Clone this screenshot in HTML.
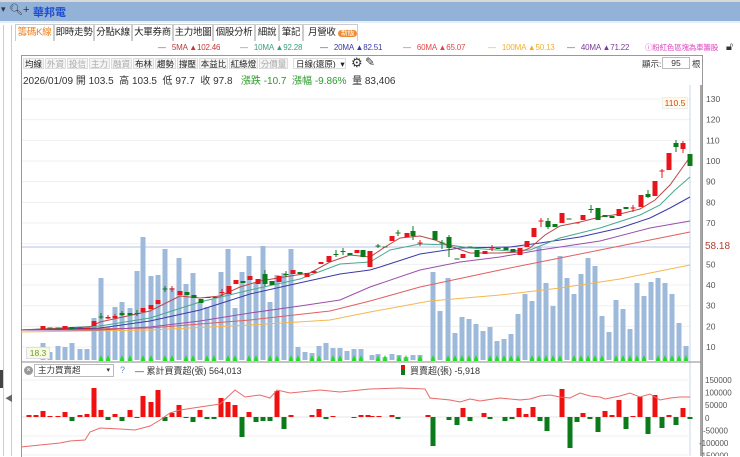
<!DOCTYPE html>
<html><head><meta charset="utf-8">
<style>
*{margin:0;padding:0;box-sizing:border-box}
body{width:740px;height:456px;overflow:hidden;background:#fff;font-family:"Liberation Sans","Noto Sans CJK TC",sans-serif;position:relative;font-size:10px;color:#333}
.abs{position:absolute;white-space:nowrap}
#top{left:0;top:0;width:740px;height:23px;background:linear-gradient(#d8d8d8 0,#d8d8d8 2px,#93b2d8 2px,#93b2d8 21px,#e8eef6 21px)}
.tab{position:absolute;top:24px;height:17px;border:1px solid #ccc;border-bottom:none;background:#fff;font-size:9.5px;line-height:16px;text-align:center;color:#222;white-space:nowrap;overflow:hidden;letter-spacing:-0.3px}
.tb{position:absolute;top:58px;height:11px;border:1px solid #ddd;background:#f4f4f4;font-size:8.5px;line-height:10px;text-align:center;color:#222;white-space:nowrap;overflow:hidden}
.tb.g{color:#aaa}
.leg{position:absolute;top:42px;font-size:8px;line-height:11px;white-space:nowrap;letter-spacing:-0.2px}
</style></head><body>
<div id="top" class="abs"></div>
<div class="abs" style="left:1px;top:4px;font-size:9px;color:#333">▾</div>
<div class="abs" style="left:9px;top:3px;font-size:11px;color:#333">🔍︎+</div>
<div class="abs" style="left:33px;top:4px;font-size:11px;color:#1f4fd0;font-weight:bold">華邦電</div>
<div class="abs" style="left:3px;top:25px;width:1px;height:431px;background:#ccc"></div>
<div class="abs" style="left:11px;top:25px;width:1px;height:431px;background:#ccc"></div>
<div class="abs" style="left:0;top:370px;width:3px;height:18px;background:#444"></div>
<div class="abs" style="left:5px;top:393px;font-size:8px;color:#666">◀</div>

<div class="tab" style="left:15px;width:39px;color:#f08020">籌碼K線</div>
<div class="tab" style="left:54px;width:40px">即時走勢</div>
<div class="tab" style="left:94px;width:38px">分點K線</div>
<div class="tab" style="left:132px;width:41px">大單券商</div>
<div class="tab" style="left:173px;width:40px">主力地圖</div>
<div class="tab" style="left:213px;width:42px">個股分析</div>
<div class="tab" style="left:255px;width:24px">細說</div>
<div class="tab" style="left:279px;width:24px">筆記</div>
<div class="tab" style="left:303px;width:55px;text-align:left;padding-left:4px">月營收 <span style="background:#f08a30;color:#fff;border-radius:5px;font-size:7px;padding:0 3px">新版</span></div>

<div class="leg" style="left:158px;color:#c03838">—&nbsp;&nbsp;&nbsp;5MA ▲102.46</div>
<div class="leg" style="left:240px;color:#3aa080">—&nbsp;&nbsp;&nbsp;10MA ▲92.28</div>
<div class="leg" style="left:320px;color:#3b3ba0">—&nbsp;&nbsp;&nbsp;20MA ▲82.51</div>
<div class="leg" style="left:403px;color:#e04848">—&nbsp;&nbsp;&nbsp;60MA ▲65.07</div>
<div class="leg" style="left:488px;color:#f0b030">—&nbsp;&nbsp;&nbsp;100MA ▲50.13</div>
<div class="leg" style="left:567px;color:#7a3a9a">—&nbsp;&nbsp;&nbsp;40MA ▲71.22</div>
<div class="leg" style="left:645px;color:#e040c0;font-size:7.5px">ⓘ粉紅色區塊為車籌股</div>
<div class="abs" style="left:726px;top:41px;font-size:11px">🔓︎</div>

<div class="abs" style="left:21px;top:55px;width:682px;height:402px;border:1px solid #999;border-bottom:none"></div>
<div class="tb" style="left:23px;width:21px">均線</div>
<div class="tb g" style="left:45px;width:21px">外資</div>
<div class="tb g" style="left:67px;width:21px">投信</div>
<div class="tb g" style="left:89px;width:21px">主力</div>
<div class="tb g" style="left:111px;width:21px">融資</div>
<div class="tb" style="left:133px;width:21px">布林</div>
<div class="tb" style="left:155px;width:21px">趨勢</div>
<div class="tb" style="left:177px;width:21px">撐壓</div>
<div class="tb" style="left:199px;width:29px">本益比</div>
<div class="tb" style="left:229px;width:29px">紅綠燈</div>
<div class="tb g" style="left:259px;width:29px">分價量</div>
<div class="tb" style="left:293px;width:53px;background:#fff;text-align:left;padding-left:2px">日線(還原)&nbsp;&nbsp;▾</div>
<div class="abs" style="left:351px;top:55px;font-size:13px;color:#333">⚙</div>
<div class="abs" style="left:365px;top:55px;font-size:12px;color:#333">✎</div>
<div class="abs" style="left:642px;top:58px;font-size:8.5px">顯示:</div>
<div class="abs" style="left:662px;top:57px;width:28px;height:12px;border:1px solid #bbb;font-size:8.5px;text-align:center;line-height:10px">95</div>
<div class="abs" style="left:692px;top:58px;font-size:8.5px">根</div>
<div class="abs" style="left:23px;top:72px;font-size:10px;color:#333">2026/01/09 開 103.5&nbsp; 高 103.5&nbsp; 低 97.7&nbsp; 收 97.8&nbsp;&nbsp; <span style="color:#2a9a2a">漲跌 -10.7&nbsp; 漲幅 -9.86%</span>&nbsp; 量 83,406</div>

<svg class="abs" style="left:0;top:0" width="740" height="456" id="s"></svg>

<div class="abs" style="left:662px;top:97px;width:26px;height:12px;background:#fffbe8;border:1px solid #eee;color:#e04020;font-size:8.5px;text-align:center;line-height:11px">110.5</div>
<div class="abs" style="left:26px;top:347px;width:24px;height:12px;background:#fafae0;border:1px solid #dde;color:#6a9a3a;font-size:8.5px;text-align:center;line-height:11px">18.3</div>
<div class="abs" style="left:705px;top:241px;color:#b04030;font-size:10px;background:#fff">58.18</div>

<div class="abs" style="left:24px;top:366px;width:9px;height:9px;border-radius:50%;background:#999;color:#fff;font-size:7px;line-height:9px;text-align:center">×</div>
<div class="abs" style="left:34px;top:364px;width:80px;height:13px;border:1px solid #bbb;font-size:8.5px;line-height:11px;padding-left:3px">主力買賣超<span style="position:absolute;right:3px;font-size:7px">▾</span></div>
<div class="abs" style="left:120px;top:365px;font-size:9px;color:#6a8ac0">?</div>
<div class="abs" style="left:135px;top:364px;font-size:9px;color:#333">— 累計買賣超(張) 564,013</div>
<div class="abs" style="left:401px;top:365px;width:4px;height:5px;background:#e01010"></div>
<div class="abs" style="left:401px;top:370px;width:4px;height:5px;background:#0a7a1a"></div>
<div class="abs" style="left:410px;top:364px;font-size:9px;color:#333">買賣超(張) -5,918</div>

<script>
var s=document.getElementById('s'),h='';
function L(x1,y1,x2,y2,c,w){h+='<line x1="'+x1+'" y1="'+y1+'" x2="'+x2+'" y2="'+y2+'" stroke="'+c+'" stroke-width="'+(w||1)+'"/>';}
function R(x,y,w,hh,c){h+='<rect x="'+x+'" y="'+y+'" width="'+w+'" height="'+hh+'" fill="'+c+'"/>';}
function T(x,y,t,c,fs){h+='<text x="'+x+'" y="'+y+'" fill="'+(c||'#333')+'" font-size="'+(fs||8.5)+'" font-family="Liberation Sans">'+t+'</text>';}
function P(pts,c,w){h+='<polyline fill="none" stroke="'+c+'" stroke-width="'+(w||1)+'" points="'+pts.map(function(p){return p.join(',')}).join(' ')+'"/>';}
for(var v=10;v<=130;v+=10){var y=99+(130-v)*2.067;L(22,y,690,y,'#f0f0f0');if(v!=60)T(706,y+3,v,'#555',8.5);}
L(22,247,690,247,'#b8c0e8');
L(690,85,690,456,'#c8d4ec');
L(701,85,701,456,'#888',1.5);
L(22,362,701,362,'#888',1);
var vol=[[43,343],[50,352],[58,346],[65,347],[72,343],[80,349],[87,349],[94,318],[101,278],[108,327],[115,307],[122,302],[130,308],[137,271],[143,237],[151,276],[158,275],[165,249],[172,288],[179,258],[186,284],[193,273],[200,303],[207,307],[214,299],[221,272],[228,249],[235,308],[242,272],[249,256],[256,283],[263,246],[270,302],[277,275],[284,273],[291,249],[298,347],[305,352],[312,353],[319,346],[326,343],[333,348],[340,348],[347,351],[354,349],[361,349],[372,355],[378,354],[385,357],[392,354],[399,355],[406,357],[413,355],[420,355],[433,272],[440,311],[448,278],[455,333],[462,317],[469,319],[476,324],[483,331],[490,327],[497,341],[504,339],[511,334],[518,314],[525,294],[532,301],[539,247],[546,283],[553,306],[560,256],[567,278],[574,294],[581,274],[588,258],[595,266],[602,316],[609,332],[616,300],[623,309],[630,329],[637,283],[644,296],[651,282],[658,278],[665,283],[672,294],[679,323],[686,346]];
vol.forEach(function(b){R(b[0]-2.5,b[1],5,360-b[1],'#9dbadb');});
vol.forEach(function(b,i){if(b[0]>=94&&i%3!=1||b[0]>430&&i%2==0)h+='<polygon points="'+(b[0]-2.5)+',361 '+(b[0]+2.5)+',361 '+b[0]+',355" fill="#22dd22"/>';});
P([[21,332],[150,330],[250,325],[330,320],[370,312],[430,301],[500,295],[560,288],[620,279],[690,265]],'#f3b850');
P([[21,330],[150,328],[250,320],[330,311],[370,301],[420,287],[500,270],[560,258],[620,246],[660,238],[690,232]],'#e26060');
P([[21,330],[100,330],[150,327],[200,321],[250,313],[300,306],[340,300],[370,287],[420,270],[460,262],[500,257],[540,250],[600,241],[650,228],[690,221]],'#9a50aa');
P([[21,330],[100,328],[150,321],[200,310],[250,294],[290,285],[340,274],[370,270],[380,267],[420,254],[460,248],[510,247],[540,243],[580,237],[620,228],[650,218],[670,208],[690,197]],'#3b3ba8');
P([[21,330],[100,326],[150,318],[200,302],[250,290],[300,279],[340,264],[370,262],[390,250],[420,244],[450,245],[470,248],[510,251],[530,250],[560,238],[600,228],[640,215],[660,205],[675,190],[690,177]],'#4aa890');
P([[21,330],[90,327],[100,322],[150,311],[180,296],[200,298],[220,296],[240,287],[260,281],[290,276],[310,273],[330,262],[350,255],[370,257],[385,247],[400,238],[420,236],[435,240],[450,246],[470,253],[500,253],[520,252],[530,248],[545,235],[560,226],[580,222],[600,217],[620,214],[640,209],[655,200],[670,185],[690,157]],'#b84848');
var c=[[43,326,329,'r'],[50,327.5,328.5,'g'],[58,327.5,328.5,'g'],[65,326,329,'r'],[72,327,329,'g'],[80,327.5,328.5,'r'],[87,328,329,'r'],[94,321,326,'r'],[101,316.5,317.5,'g',313,319],[108,317,318.5,'r',315,319],[115,316,318,'r',314,319],[122,313,315,'g',311,316],[130,313,315,'g'],[137,313,314,'g',310,316],[143,308,312,'r'],[151,305,309,'r'],[158,300,304,'r'],[165,288.5,289.5,'g',286,292],[172,288.5,289.5,'r',286,292],[180,291,295,'r'],[187,292,295,'g'],[194,295,298,'g'],[201,299,303,'g'],[208,297,298,'g'],[215,297,298,'r'],[222,292,293,'r',289,296],[229,286,294,'r'],[236,280,284,'r'],[243,281,283,'g'],[250,276,280,'r'],[258,279,284,'r'],[265,274,284,'g',270,286],[272,281,285,'g'],[279,276,282,'r'],[286,274,275,'g',271,277],[293,270,274,'r'],[300,272,274,'g'],[307,273,277,'r'],[314,271,273,'r'],[321,262,264,'r'],[329,256,262,'r'],[336,254,255,'g',250,257],[343,251,252,'g',248,255],[350,253,255,'g'],[357,250,253,'r'],[363,250,257,'g'],[370,251,267,'r'],
[378,245.5,246.5,'g',244,248],[385,246.5,247.5,'g'],[392,236,241,'r'],[398,232.5,233.5,'g',230,236],[407,233,237,'r'],[413,231,236,'g',226,240],[420,242.5,243.5,'r',240,246],[435,231,240,'g'],[442,242.5,243.5,'g',240,249],[449,237,248,'g',235,257],[457,258.5,259.5,'g'],[463,254,258,'r'],[470,246.5,247.5,'g'],[477,250,257,'g'],[485,251,254,'r'],[492,247.5,248.5,'r',245,251],[498,248,249,'g'],[506,247,250,'g'],[513,249,252,'g'],[520,248,255,'r'],[527,241,247,'r'],[534,228,237,'r'],[541,220.5,221.5,'r',218,227],[548,221,227,'g',218,229],[555,224,227,'g'],[562,213,223,'r'],[569,218.5,219.5,'g'],[577,222.5,223.5,'r'],[583,215,220,'r'],[591,209,210,'g',205,213],[598,208,220,'g'],[605,215,217,'g'],[612,216,218,'g'],[619,209,216,'r'],[626,207,209,'g'],[633,207.5,208.5,'r',205,212],[641,195,207,'r'],[648,194,197,'g',190,198],[655,181,196,'r'],[662,170.5,171.5,'r',169,178],[669,153,170,'r'],[676,143,147,'g',140,152],[683,143,149,'r',141,153],[690,154,166,'g']];
c.forEach(function(k){var col=k[3]=='r'?'#e8141c':'#0a7a1a';if(k[4])L(k[0],k[4],k[0],k[5],col);R(k[0]-2.5,k[1],5,Math.max(1,k[2]-k[1]),col);});
[380,399,417,436,455].forEach(function(y){L(22,y,690,y,'#f2f2f2');});
var lx={'150000':705,'100000':705,'50000':705,'0':705,'-50000':703,'-100000':699,'-150000':699};
['150000','100000','50000','0','-50000','-100000','-150000'].forEach(function(t,i){T(lx[t],383+i*12.6,t,'#555',8);});
L(22,417,690,417,'#e6e6e6');
var bb=[[29,415],[36,415],[43,411],[50,416],[58,416],[65,412],[72,421],[80,415],[87,414],[94,388],[101,410],[108,420],[115,414],[122,421],[130,410],[137,418],[143,396],[151,402],[158,390],[165,421],[172,413],[179,405],[186,418],[193,422],[200,410],[207,419],[214,419],[221,398],[228,402],[235,405],[242,437],[249,412],[256,422],[263,421],[270,421],[277,391],[284,429],[291,415],[312,415],[319,409],[326,419],[333,416],[354,418],[361,415],[368,415],[372,416],[379,416],[392,415],[398,419],[428,415],[433,446],[449,420],[457,425],[463,408],[470,421],[484,413],[490,419],[505,421],[512,419],[519,408],[526,414],[533,407],[540,421],[547,431],[562,389],[570,448],[577,422],[583,413],[590,419],[598,432],[605,411],[612,415],[619,400],[626,429],[633,416],[640,397],[648,434],[655,395],[662,428],[669,415],[676,425],[683,408],[690,419]];
bb.forEach(function(b){var y=b[1];if(y<417)R(b[0]-2.5,y,5,417-y,'#f01010');else R(b[0]-2.5,417,5,y-417,'#0a7a1a');});
P([[21,447],[40,445],[60,443],[70,441],[85,440],[90,432],[100,428],[120,429],[135,430],[150,426],[160,420],[170,413],[180,410],[200,407],[220,404],[235,390],[245,397],[260,395],[270,398],[277,390],[290,393],[320,390],[340,392],[360,390],[370,389],[400,388],[425,389],[430,398],[450,400],[460,402],[470,399],[480,401],[500,398],[520,400],[530,399],[540,396],[550,395],[560,397],[570,398],[580,393],[590,396],[600,397],[605,399],[610,398],[620,396],[630,393],[640,397],[650,394],[660,400],[670,398],[680,397],[690,397]],'#e86a6a');
s.innerHTML=h;
</script>
</body></html>
